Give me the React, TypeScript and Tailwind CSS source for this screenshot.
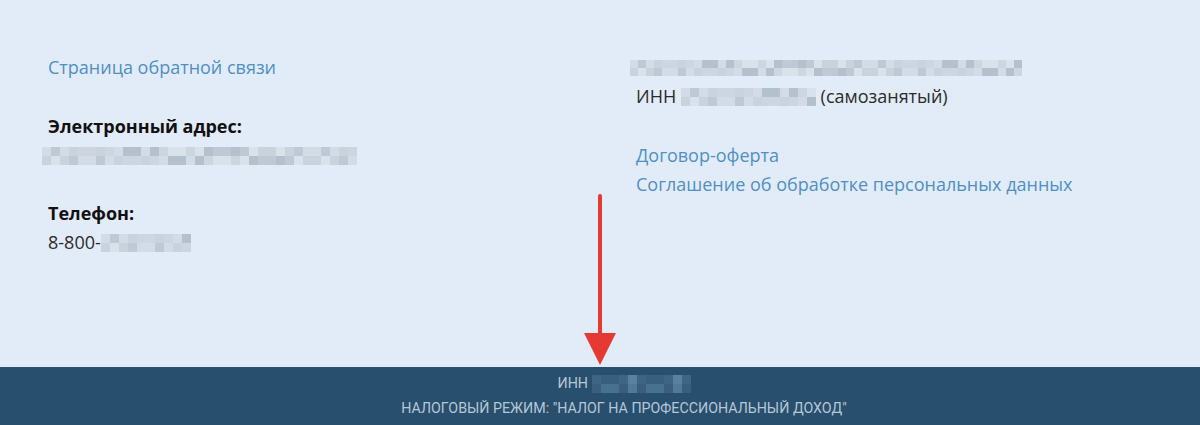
import React from "react";

// pixelated "censored" block, colors are deterministic so the render is stable
function Mosaic({ width, rows = 2, cell = 9, dark = false, className = "" }: { width: number; rows?: number; cell?: number; dark?: boolean; className?: string }) {
  const cols = Math.ceil(width / cell);
  const light = ["#d3dce6", "#c9d3de", "#bfc9d5", "#d9e1ea", "#b5c0cd", "#cdd6e0"];
  const darkP = ["#3f6585", "#48708f", "#527a98", "#3a5f7e", "#5a819e"];
  const pal = dark ? darkP : light;
  const cells = [];
  for (let r = 0; r < rows; r++) {
    for (let c = 0; c < cols; c++) {
      const i = (c * 7 + r * 13 + ((c * c) % 5)) % pal.length;
      cells.push(<span key={r + "-" + c} style={{ background: pal[i] }} className="block" />);
    }
  }
  return (
    <span
      className={"inline-grid align-middle " + className}
      style={{ gridTemplateColumns: `repeat(${cols}, ${cell}px)`, gridAutoRows: `${cell}px` }}
    >
      {cells}
    </span>
  );
}

export default function App() {
  return (
    <div className="relative w-[1200px] h-[425px] overflow-hidden font-['Open_Sans',sans-serif]">
      <section className="h-[367px] bg-[#e2ecf8] flex pt-[53px] text-[18px] leading-[29px] text-[#2b2b2b]">
        <div className="w-[588px] pl-[48px] flex flex-col">
          <a className="text-[#4f8fc6]">Страница обратной связи</a>
          <div className="mt-[30px] font-bold text-[#111]">Электронный адрес:</div>
          <div className="h-[29px] flex items-center -ml-[6px]">
            <Mosaic width={310} rows={2} />
          </div>
          <div className="mt-[29px] font-bold text-[#111]">Телефон:</div>
          <div className="flex items-center">
            8-800-
            <Mosaic width={90} rows={2} />
          </div>
        </div>
        <div className="flex-1 pl-[48px] flex flex-col">
          <div className="h-[29px] flex items-center -ml-[6px]">
            <Mosaic width={386} rows={2} cell={8} />
          </div>
          <div className="flex items-center">
            ИНН&nbsp;
            <Mosaic width={130} rows={2} />
            &nbsp;(самозанятый)
          </div>
          <a className="mt-[30px] text-[#4f8fc6]">Договор-оферта</a>
          <a className="text-[#4f8fc6]">Соглашение об обработке персональных данных</a>
        </div>
      </section>
      <footer className="h-[58px] bg-[#284f6d] pl-[48px] flex flex-col items-center justify-center font-['Roboto',sans-serif] text-[14.25px] leading-[25px] text-[#b7c7d6]">
        <div className="flex items-center">
          ИНН&nbsp;
          <Mosaic width={98} rows={2} cell={9} dark />
        </div>
        <div>НАЛОГОВЫЙ РЕЖИМ: "НАЛОГ НА ПРОФЕССИОНАЛЬНЫЙ ДОХОД"</div>
      </footer>
      <svg className="absolute left-[580px] top-[190px]" width="40" height="180" viewBox="0 0 40 180">
        <line x1="20" y1="6" x2="20" y2="150" stroke="#e53a33" strokeWidth="4" strokeLinecap="round" />
        <polygon points="4,143 36,143 20,175" fill="#e53a33" />
      </svg>
    </div>
  );
}
